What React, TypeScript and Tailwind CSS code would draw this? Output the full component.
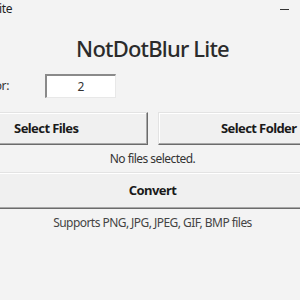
import React from 'react';

const btn =
  'flex items-center justify-center bg-[#f0f0f0] border border-t-[#e3e3e3] border-l-[#e3e3e3] border-b-[#6b6b6b] border-r-[#6b6b6b] shadow-[inset_-1px_-1px_0_#a8a8a8,inset_1px_1px_0_#ffffff] text-[13px] font-bold tracking-[-0.6px] text-[#1a1a1a]';

const App: React.FC = () => {
  return (
    <div className="w-[300px] h-[300px] overflow-hidden bg-[#f3f3f3] font-['Noto_Sans',sans-serif] text-[#333]">
      <div className="w-[415px] -ml-[55px]">
        <div className="h-[18px] flex items-center">
          <div className="w-[67px] flex justify-end overflow-visible">
            <span className="text-[12px] tracking-[-0.4px] whitespace-nowrap text-[#222]">NotDotBlur Lite</span>
          </div>
          <div className="ml-[268px] w-[9px] h-px bg-[#333]" />
        </div>

        <h1 className="mt-[15px] text-center text-[22px] leading-[30px] font-medium tracking-[-0.8px] text-[#2b2b2b]">
          NotDotBlur Lite
        </h1>

        <div className="mt-[11px] h-[24px] flex items-center">
          <div className="w-[64px] flex justify-end">
            <span className="text-[12px] tracking-[-0.4px] whitespace-nowrap">Blur factor:</span>
          </div>
          <div className="ml-[36px] w-[71px] h-[24px] bg-white border-t-2 border-l-2 border-t-[#8a8a8a] border-l-[#8a8a8a] border-b border-r border-b-[#e8e8e8] border-r-[#e8e8e8] flex items-center justify-center text-[12px] text-[#333]">
            2
          </div>
        </div>

        <div className="mt-[14px] flex gap-[10px]">
          <button className={`${btn} w-[203px] h-[33px]`}>Select Files</button>
          <button className={`${btn} w-[203px] h-[33px]`}>Select Folder</button>
        </div>

        <p className="mt-[3px] text-center text-[12px] leading-[22px] tracking-[-0.55px] text-[#333]">No files selected.</p>

        <button className={`${btn} mt-[2px] w-[415px] h-[37px]`}>Convert</button>

        <p className="mt-[4px] text-center text-[12px] leading-[20px] tracking-[-0.55px] text-[#444]">
          Supports PNG, JPG, JPEG, GIF, BMP files
        </p>
      </div>
    </div>
  );
};

export default App;
